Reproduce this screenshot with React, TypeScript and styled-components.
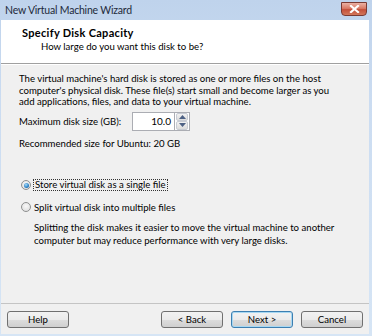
import * as React from 'react';
import styled, { createGlobalStyle, css } from 'styled-components';

const GlobalStyle = createGlobalStyle`
    html, body {
        margin: 0;
        padding: 0;
        background: #ffffff;
    }
    body {
        font-family: Lato, 'Noto Sans', sans-serif;
        font-size: 9.6px;
        color: #000;
    }
`;

export default () => {
    return (
        <>
            <GlobalStyle />
            <Window>
                <TitleBar>
                    <Title>New Virtual Machine Wizard</Title>
                    <CloseButton aria-label="Close">
                        <svg width="11" height="8" viewBox="0 0 11 8">
                            <path d="M2 1 L9 7 M9 1 L2 7" stroke="#ffffff" strokeWidth="2.2" strokeLinecap="square" />
                        </svg>
                    </CloseButton>
                </TitleBar>
                <Client>
                    <Header>
                        <HeaderTitle>Specify Disk Capacity</HeaderTitle>
                        <HeaderSub>How large do you want this disk to be?</HeaderSub>
                    </Header>
                    <Content>
                        <Paragraph>
                            The virtual machine's hard disk is stored as one or more files on the host
                            computer's physical disk. These file(s) start small and become larger as you
                            add applications, files, and data to your virtual machine.
                        </Paragraph>
                        <SizeRow>
                            <Label>Maximum disk size (GB):</Label>
                            <Spinner>
                                <SpinInput>10.0</SpinInput>
                                <SpinButtons>
                                    <SpinButton>
                                        <svg width="7" height="4" viewBox="0 0 7 4">
                                            <path d="M0 4 L3.5 0 L7 4 Z" fill="#4d6185" />
                                        </svg>
                                    </SpinButton>
                                    <SpinButton>
                                        <svg width="7" height="4" viewBox="0 0 7 4">
                                            <path d="M0 0 L3.5 4 L7 0 Z" fill="#4d6185" />
                                        </svg>
                                    </SpinButton>
                                </SpinButtons>
                            </Spinner>
                        </SizeRow>
                        <Note>Recommended size for Ubuntu: 20 GB</Note>
                        <Options>
                            <RadioRow>
                                <Radio $checked />
                                <FocusText>Store virtual disk as a single file</FocusText>
                            </RadioRow>
                            <RadioRow>
                                <Radio />
                                <span>Split virtual disk into multiple files</span>
                            </RadioRow>
                            <Description>
                                Splitting the disk makes it easier to move the virtual machine to another
                                computer but may reduce performance with very large disks.
                            </Description>
                        </Options>
                    </Content>
                    <Footer>
                        <Button>Help</Button>
                        <Spacer />
                        <Button>&lt; Back</Button>
                        <Button $default>Next &gt;</Button>
                        <Button>Cancel</Button>
                    </Footer>
                </Client>
            </Window>
        </>
    );
};

const Window = styled.div`
    width: 372px;
    height: 336px;
    box-sizing: border-box;
    display: flex;
    flex-direction: column;
    background: linear-gradient(180deg, #bfd3ec 0%, #cbdcf1 30%, #d6e5f5 100%);
    padding: 0 3px 2px 1px;
    overflow: hidden;
`;
const TitleBar = styled.div`
    height: 20px;
    display: flex;
    align-items: center;
    justify-content: space-between;
    padding-left: 4px;
`;
const Title = styled.div`
    font-size: 10.5px;
    letter-spacing: -0.2px;
    color: #1e2a3a;
`;
const CloseButton = styled.div`
    width: 26px;
    height: 14px;
    margin-top: -3px;
    margin-right: 2px;
    box-sizing: border-box;
    border: 1px solid #7a3a33;
    border-radius: 0 0 4px 4px;
    background: linear-gradient(180deg, #eab1a4 0%, #d97a66 45%, #c4503a 55%, #d2775a 100%);
    display: flex;
    align-items: center;
    justify-content: center;
`;
const Client = styled.div`
    flex: 1;
    display: flex;
    flex-direction: column;
    background: #f0f0f0;
`;
const Header = styled.div`
    background: #ffffff;
    height: 44px;
    box-sizing: border-box;
    padding: 6px 0 0 21px;
    border-bottom: 1px solid #a0a0a0;
    box-shadow: 0 1px 0 #ffffff;
`;
const HeaderTitle = styled.div`
    font-weight: bold;
    font-size: 11px;
    letter-spacing: 0.3px;
    line-height: 13px;
`;
const HeaderSub = styled.div`
    padding-left: 19px;
    margin-top: 1px;
    line-height: 13px;
`;
const Content = styled.div`
    flex: 1;
    padding: 9px 0 0 18px;
    display: flex;
    flex-direction: column;
`;
const Paragraph = styled.p`
    margin: 0;
    line-height: 11.5px;
    width: 325px;
`;
const SizeRow = styled.div`
    display: flex;
    align-items: center;
    margin-top: 4px;
`;
const Label = styled.span`
    width: 113px;
`;
const Spinner = styled.div`
    display: flex;
    height: 19px;
`;
const SpinInput = styled.div`
    width: 42px;
    box-sizing: border-box;
    background: #ffffff;
    border: 1px solid #abadb3;
    border-right: none;
    text-align: right;
    padding-right: 3px;
    line-height: 17px;
    font-size: 10px;
`;
const SpinButtons = styled.div`
    display: flex;
    flex-direction: column;
    width: 16px;
    box-sizing: border-box;
    border: 1px solid #abadb3;
    background: #ffffff;
`;
const SpinButton = styled.div`
    flex: 1;
    display: flex;
    align-items: center;
    justify-content: center;
    margin: 0 1px;
    background: linear-gradient(180deg, #f2f2f2, #dcdcdc);
    border: 1px solid #c8ccd4;
    border-radius: 2px;
`;
const Note = styled.div`
    margin-top: 7px;
    line-height: 12px;
`;
const Options = styled.div`
    margin-top: 29px;
    display: flex;
    flex-direction: column;
    gap: 9px;
`;
const RadioRow = styled.div`
    display: flex;
    align-items: center;
    height: 13px;
    padding-left: 2px;
`;
const Radio = styled.span<{ $checked?: boolean }>`
    width: 10px;
    height: 10px;
    box-sizing: border-box;
    border-radius: 50%;
    border: 1px solid #8e8f8f;
    background: radial-gradient(circle at 50% 40%, #f8f8f8 0%, #e0e0e0 80%);
    margin-right: 3px;
    display: flex;
    align-items: center;
    justify-content: center;
    ${({ $checked }) =>
        $checked &&
        css`
            &::after {
                content: '';
                width: 5px;
                height: 5px;
                border-radius: 50%;
                background: radial-gradient(circle at 40% 35%, #a7dcfa 0%, #2a7fc4 60%, #185a96 100%);
            }
        `}
`;
const FocusText = styled.span`
    outline: 1px dotted #333;
    outline-offset: 0;
    line-height: 10px;
    padding: 0 1px;
`;
const Description = styled.p`
    margin: -2px 0 0 15px;
    line-height: 13px;
    width: 335px;
`;
const Footer = styled.div`
    height: 30px;
    border-top: 1px solid #c4c4c4;
    display: flex;
    align-items: center;
    gap: 8px;
    padding: 0 6px 0 6px;
`;
const Spacer = styled.div`
    flex: 1;
`;
const Button = styled.div<{ $default?: boolean }>`
    width: 62px;
    height: 17px;
    box-sizing: border-box;
    border: 1px solid #707070;
    border-radius: 3px;
    background: linear-gradient(180deg, #f2f2f2 0%, #ebebeb 50%, #dddddd 51%, #cfcfcf 100%);
    display: flex;
    align-items: center;
    justify-content: center;
    ${({ $default }) =>
        $default &&
        css`
            border-color: #3c7fb1;
            box-shadow: inset 0 0 0 1px #a8d8f2;
        `}
`;
